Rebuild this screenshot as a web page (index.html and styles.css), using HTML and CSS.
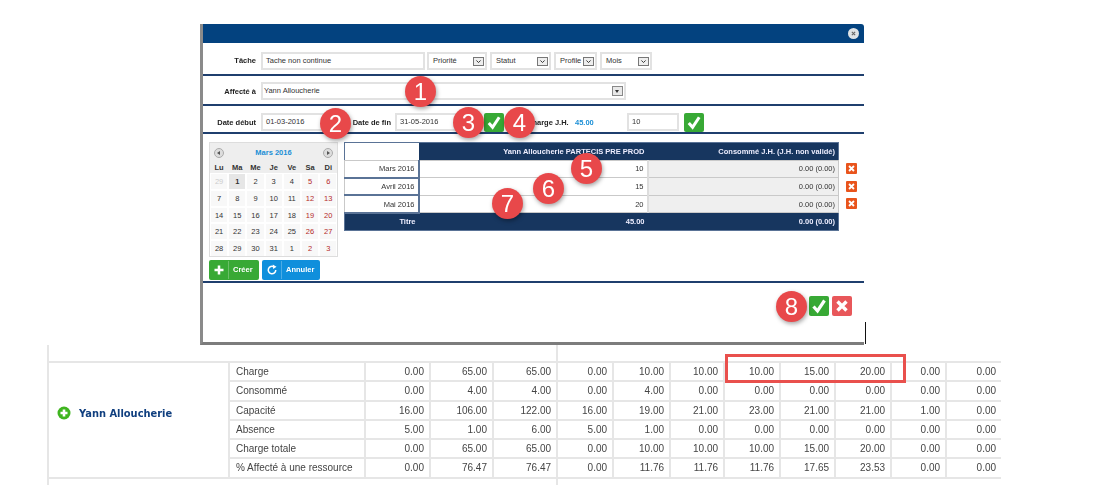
FILE: index.html
```html
<!DOCTYPE html>
<html lang="fr">
<head>
    <meta charset="UTF-8">
    <title>Affectation de tâche</title>
    <link rel="stylesheet" href="styles.css">
</head>
<body>

<svg width="0" height="0" class="defs">
    <symbol id="chev" viewBox="0 0 12 10"><path d="M3 3.5 6 6.5 9 3.5" fill="none" stroke="#333" stroke-width="1.4"/></symbol>
    <symbol id="check" viewBox="0 0 20 20"><path d="M4.5 10.5 8.5 15 15.5 4.5" fill="none" stroke="#fff" stroke-width="3.2"/></symbol>
    <symbol id="cross" viewBox="0 0 20 20"><path d="M5.5 5.5 14.5 14.5M14.5 5.5 5.5 14.5" fill="none" stroke="#fff" stroke-width="3.4"/></symbol>
</svg>

<div class="dialog">
    <div class="dialog-head">
        <span class="close"><svg viewBox="0 0 20 20"><path d="M7 7 13 13M13 7 7 13" fill="none" stroke="#666" stroke-width="2"/></svg></span>
    </div>

    <div class="row row-task">
        <label class="lbl">Tâche</label>
        <div class="field f-task">Tache non continue</div>
        <div class="pick p-prio">Priorité<svg class="arrow"><use href="#chev"/></svg></div>
        <div class="pick p-stat">Statut<svg class="arrow"><use href="#chev"/></svg></div>
        <div class="pick p-prof">Profile<svg class="arrow"><use href="#chev"/></svg></div>
        <div class="pick p-mois">Mois<svg class="arrow"><use href="#chev"/></svg></div>
    </div>

    <div class="row row-user">
        <label class="lbl">Affecté à</label>
        <div class="pick p-user">Yann Alloucherie<span class="arrow-dark"></span></div>
    </div>

    <div class="row row-dates">
        <label class="lbl">Date début</label>
        <div class="field f-start">01-03-2016</div>
        <label class="lbl lbl-end">Date de fin</label>
        <div class="field f-end">31-05-2016</div>
        <span class="ok ok-dates"><svg><use href="#check"/></svg></span>
        <label class="lbl lbl-charge">Charge J.H.</label>
        <span class="total">45.00</span>
        <div class="field f-charge">10</div>
        <span class="ok ok-charge"><svg><use href="#check"/></svg></span>
    </div>

    <div class="body">
        <div class="side">
            <div class="cal">
                <div class="cal-head">
                    <span class="nav"></span>
                    <span class="cal-title">Mars 2016</span>
                    <span class="nav nav-next"></span>
                </div>
                <div class="cal-dow">
                    <span>Lu</span><span>Ma</span><span>Me</span><span>Je</span><span>Ve</span><span>Sa</span><span>Di</span>
                </div>
                <div class="cal-days">
                    <span class="off">29</span><span class="today">1</span><span>2</span><span>3</span><span>4</span><span class="we">5</span><span class="we">6</span>
                    <span>7</span><span>8</span><span>9</span><span>10</span><span>11</span><span class="we">12</span><span class="we">13</span>
                    <span>14</span><span>15</span><span>16</span><span>17</span><span>18</span><span class="we">19</span><span class="we">20</span>
                    <span>21</span><span>22</span><span>23</span><span>24</span><span>25</span><span class="we">26</span><span class="we">27</span>
                    <span>28</span><span>29</span><span>30</span><span>31</span><span>1</span><span class="we">2</span><span class="we">3</span>
                </div>
            </div>
            <div class="actions">
                <button class="btn btn-add">
                    <svg viewBox="0 0 16 16"><path d="M8 2V14M2 8H14" fill="none" stroke="#fff" stroke-width="3.4"/></svg>
                    <span>Créer</span>
                </button>
                <button class="btn btn-undo">
                    <svg viewBox="0 0 16 16"><path d="M13 8A5 5 0 1 1 10.5 3.7" fill="none" stroke="#fff" stroke-width="2"/><path d="M9 .8 14 3.6 9.6 6.6Z" fill="#fff"/></svg>
                    <span>Annuler</span>
                </button>
            </div>
        </div>

        <div class="plan-wrap">
            <table class="plan">
                <thead>
                    <tr><th class="blank"></th><th>Yann Alloucherie PARTECIS PRE PROD</th><th>Consommé J.H. (J.H. non validé)</th></tr>
                </thead>
                <tbody>
                    <tr><td class="month">Mars 2016</td><td>10</td><td class="used">0.00 (0.00)</td></tr>
                    <tr><td class="month">Avril 2016</td><td>15</td><td class="used">0.00 (0.00)</td></tr>
                    <tr><td class="month">Mai 2016</td><td>20</td><td class="used">0.00 (0.00)</td></tr>
                </tbody>
                <tfoot>
                    <tr><th>Titre</th><th>45.00</th><th>0.00 (0.00)</th></tr>
                </tfoot>
            </table>
            <div class="dels">
                <span class="del"><svg><use href="#cross"/></svg></span>
                <span class="del"><svg><use href="#cross"/></svg></span>
                <span class="del"><svg><use href="#cross"/></svg></span>
            </div>
        </div>
    </div>

    <div class="foot">
        <span class="ok"><svg><use href="#check"/></svg></span>
        <span class="ko"><svg><use href="#cross"/></svg></span>
    </div>
</div>

<table class="grid">
    <colgroup>
        <col class="c-name"><col class="c-kind">
        <col class="c-a"><col class="c-b"><col class="c-c">
        <col class="c-d"><col class="c-e"><col class="c-f"><col class="c-g"><col class="c-h"><col class="c-i"><col class="c-j"><col class="c-k">
    </colgroup>
    <tr class="edge"><td colspan="5"></td><td colspan="8" class="open"></td></tr>
    <tr>
        <td rowspan="6" class="who"><span class="who-in"><svg viewBox="0 0 14 14"><circle cx="7" cy="7" r="6.5" fill="#3fb51f"/><path d="M7 3.5V10.5M3.5 7H10.5" stroke="#fff" stroke-width="2.6"/></svg>Yann Alloucherie</span></td>
        <td class="kind">Charge</td><td>0.00</td><td>65.00</td><td>65.00</td>
        <td>0.00</td><td>10.00</td><td>10.00</td><td>10.00</td><td>15.00</td><td>20.00</td><td>0.00</td><td class="open">0.00</td>
    </tr>
    <tr>
        <td class="kind">Consommé</td><td>0.00</td><td>4.00</td><td>4.00</td>
        <td>0.00</td><td>4.00</td><td>0.00</td><td>0.00</td><td>0.00</td><td>0.00</td><td>0.00</td><td class="open">0.00</td>
    </tr>
    <tr>
        <td class="kind">Capacité</td><td>16.00</td><td>106.00</td><td>122.00</td>
        <td>16.00</td><td>19.00</td><td>21.00</td><td>23.00</td><td>21.00</td><td>21.00</td><td>1.00</td><td class="open">0.00</td>
    </tr>
    <tr>
        <td class="kind">Absence</td><td>5.00</td><td>1.00</td><td>6.00</td>
        <td>5.00</td><td>1.00</td><td>0.00</td><td>0.00</td><td>0.00</td><td>0.00</td><td>0.00</td><td class="open">0.00</td>
    </tr>
    <tr>
        <td class="kind">Charge totale</td><td>0.00</td><td>65.00</td><td>65.00</td>
        <td>0.00</td><td>10.00</td><td>10.00</td><td>10.00</td><td>15.00</td><td>20.00</td><td>0.00</td><td class="open">0.00</td>
    </tr>
    <tr>
        <td class="kind">% Affecté à une ressource</td><td>0.00</td><td>76.47</td><td>76.47</td>
        <td>0.00</td><td>11.76</td><td>11.76</td><td>11.76</td><td>17.65</td><td>23.53</td><td>0.00</td><td class="open">0.00</td>
    </tr>
    <tr class="edge"><td colspan="5"></td><td colspan="8" class="open"></td></tr>
</table>

<!-- annotations posées sur la capture -->
<div class="mark m1">1</div>
<div class="mark m2">2</div>
<div class="mark m3">3</div>
<div class="mark m4">4</div>
<div class="mark m5">5</div>
<div class="mark m6">6</div>
<div class="mark m7">7</div>
<div class="mark m8">8</div>
<div class="hilite"></div>
<div class="tick"></div>

</body>
</html>
```

FILE: styles.css
```css
* {
    box-sizing: border-box;
}

html {
    background: #fff;
}

body {
    margin: 0;
    font-family: "Liberation Sans", Arial, sans-serif;
    font-size: 7.5px;
    color: #333;
    position: relative;
    height: 501px;
    overflow: hidden;
    filter: blur(.35px); /* the capture is a scaled-up picture */
}

.defs {
    position: absolute;
}

.dialog {
    width: 664px;
    height: 321px;
    margin: 24px 0 0 200px;
    border-left: 3px solid #8a8a8a;
    border-bottom: 3px solid #7c7c7c;
}

.dialog-head {
    height: 19px;
    background: #03427f;
    border-radius: 0 3px 0 0;
    display: flex;
    justify-content: flex-end;
    align-items: center;
    padding-right: 5px;
}

.close {
    width: 11px;
    height: 11px;
    border-radius: 50%;
    background: #dfe3e6;
    display: flex;
}

.row {
    display: flex;
    align-items: center;
    border-bottom: 2px solid #1f3f6e;
}

.row-task {
    height: 33px;
    padding-top: 4px;
}

.row-user {
    height: 30px;
    padding-top: 2px;
}

.row-dates {
    height: 28px;
    padding-top: 6px;
}

.lbl {
    width: 53px;
    margin-right: 5px;
    text-align: right;
    font-weight: bold;
    color: #222;
    white-space: nowrap;
    flex: none;
}

.field,
.pick {
    height: 18px;
    border: 2px solid #e2e2e2;
    background: #fff;
    line-height: 14px;
    padding-left: 3px;
    flex: none;
    position: relative;
}

.pick {
    margin-right: 3px;
    padding-left: 4px;
}

.f-task { width: 164px; margin-right: 2px; }
.p-prio { width: 60px; }
.p-stat { width: 61px; }
.p-prof { width: 43px; }
.p-mois { width: 52px; }
.p-user { width: 365px; padding-left: 1px; }

.arrow {
    position: absolute;
    right: 1px;
    top: 3px;
    width: 11px;
    height: 9px;
    border: 1px solid #777;
    background: #eee;
}

.arrow-dark {
    position: absolute;
    right: 1px;
    top: 2px;
    width: 11px;
    height: 10px;
    border: 1px solid #888;
    background: #e8e8e8;
}

.arrow-dark::after {
    content: "";
    position: absolute;
    left: 2px;
    top: 3px;
    border-left: 2.5px solid transparent;
    border-right: 2.5px solid transparent;
    border-top: 3px solid #333;
}

.f-start { width: 75px; margin-right: 16px; }
.lbl-end { width: 39px; margin-right: 4px; }
.f-end { width: 74px; margin-right: 15px; }
.lbl-charge { width: 39px; margin: 0 9px 0 23px; }
.total { width: 52px; color: #1b8fd6; font-weight: bold; flex: none; }
.f-charge { width: 52px; margin-right: 5px; }

.ok,
.ko {
    width: 20px;
    height: 20px;
    border-radius: 2px;
    background: #38a935;
    display: inline-block;
    flex: none;
}

.ok-dates,
.ok-charge {
    height: 19px;
}

.ko {
    background: #e8575a;
}

.ok svg,
.ko svg {
    width: 100%;
    height: 100%;
    display: block;
}

.body {
    height: 149px;
    padding: 8px 0 0 6px;
    display: flex;
    gap: 6px;
    border-bottom: 2px solid #1f3f6e;
}

.side {
    width: 129px;
    flex: none;
}

.cal {
    height: 115px;
    border: 1px solid #ddd;
    background: #fff;
}

.cal-head {
    height: 19px;
    background: #eee;
    display: flex;
    align-items: center;
    justify-content: space-between;
    padding: 0 4px;
}

.cal-title {
    font-weight: bold;
    color: #1b8fd6;
}

.nav {
    width: 10px;
    height: 10px;
    border: 1px solid #aaa;
    border-radius: 50%;
    background: #ddd;
    position: relative;
}

.nav::after {
    content: "";
    position: absolute;
    left: 2px;
    top: 2px;
    border-top: 2px solid transparent;
    border-bottom: 2px solid transparent;
    border-right: 3px solid #555;
}

.nav-next::after {
    left: 3px;
    border-right: 0;
    border-left: 3px solid #555;
}

.cal-dow,
.cal-days {
    display: grid;
    grid-template-columns: repeat(7, 18.2px);
    text-align: center;
}

.cal-dow {
    height: 11px;
    line-height: 11px;
    background: #eee;
    font-weight: bold;
    color: #333;
}

.cal-days {
    grid-auto-rows: 16.8px;
}

.cal-days span {
    margin: 1px;
    background: #f8f8f8;
    line-height: 15px;
}

.cal-days .off { color: #ccc; }
.cal-days .we { color: #b52a2a; }
.cal-days .today { background: #e6e6e6; font-weight: bold; color: #333; }

.actions {
    display: flex;
    gap: 3px;
    margin-top: 3px;
}

.btn {
    height: 20px;
    border: 0;
    border-radius: 2px;
    padding: 0;
    color: #fff;
    font: bold 7.5px "Liberation Sans", Arial, sans-serif;
    display: flex;
    align-items: center;
}

.btn svg {
    width: 12px;
    height: 12px;
    margin: 0 3px 0 4px;
    flex: none;
}

.btn span {
    border-left: 1px solid rgba(255, 255, 255, .25);
    line-height: 18px;
    padding-left: 4px;
}

.btn-add { width: 50px; background: #38a935; }
.btn-undo { width: 58px; background: #0f8fdc; }

.plan-wrap {
    display: flex;
    align-items: flex-start;
}

.plan {
    width: 495px;
    border-collapse: collapse;
    table-layout: fixed;
    border: 1px solid #5a7396;
}

.plan th,
.plan td {
    height: 17.6px;
    padding: 0 3px;
    text-align: right;
}

.plan th {
    background: #17365f;
    color: #eef;
    font-weight: bold;
}

.plan th:first-child,
.plan td:first-child {
    width: 74px;
}

.plan th:nth-child(2) {
    width: 229px;
}

.plan th.blank {
    background: #fff;
}

.plan td {
    border: 1px solid #c9c9c9;
}

.plan td.month {
    border-right: 2px solid #5a7396;
    border-bottom: 2px solid #5a7396;
}

.plan td.used {
    background: #efefef;
    border-left: 2px solid #ddd;
}

.dels {
    display: flex;
    flex-direction: column;
    gap: 6.5px;
    margin: 21px 0 0 7px;
}

.del {
    width: 11px;
    height: 11px;
    border-radius: 1px;
    background: #e9541c;
}

.del svg {
    width: 100%;
    height: 100%;
    display: block;
}

.foot {
    display: flex;
    justify-content: flex-end;
    gap: 3px;
    padding: 13px 12px 0 0;
}

.grid {
    width: 953px;
    margin: 0 0 0 47px;
    border-collapse: collapse;
    table-layout: fixed;
    font-size: 10px;
    color: #444;
}

.c-name { width: 181px; }
.c-kind { width: 136px; }
.c-a { width: 65px; }
.c-b { width: 63px; }
.c-c { width: 64px; }
.c-d { width: 56px; }
.c-e { width: 57px; }
.c-f { width: 54px; }
.c-g { width: 56px; }
.c-h { width: 55px; }
.c-i { width: 56px; }
.c-j { width: 55px; }
.c-k { width: 55px; }

.grid td {
    height: 19.25px;
    border: 2px solid #e6e6e6;
    padding: 0 5px 0 0;
    text-align: right;
}

.grid .open {
    border-right: 0;
}

.grid .edge td {
    height: 17px;
    border-top: 0;
}

.grid tr.edge:last-child td {
    height: 7px;
    border-bottom: 0;
}

.grid td.kind {
    text-align: left;
    padding-left: 6px;
}

.grid td.who {
    text-align: left;
    padding: 0 0 13px 8px;
}

.who-in {
    display: flex;
    align-items: center;
    gap: 8px;
    font: bold 9.9px "DejaVu Sans", sans-serif;
    color: #103f7f;
    white-space: nowrap;
}

.who-in svg {
    width: 14px;
    height: 14px;
}

.mark {
    position: absolute;
    width: 31px;
    height: 31px;
    border-radius: 50%;
    background: #e8484a;
    color: #fff;
    font-size: 24px;
    line-height: 31px;
    text-align: center;
    box-shadow: 1px 2px 4px rgba(0, 0, 0, .35);
}

.m1 { left: 405px; top: 76px; }
.m2 { left: 320px; top: 108px; }
.m3 { left: 453px; top: 107px; }
.m4 { left: 504px; top: 107px; }
.m5 { left: 571px; top: 153px; }
.m6 { left: 533px; top: 173px; }
.m7 { left: 492px; top: 188px; }
.m8 { left: 776px; top: 291px; }

.hilite {
    position: absolute;
    left: 725px;
    top: 354px;
    width: 181px;
    height: 29px;
    border: 3px solid #e9504d;
}

.tick {
    position: absolute;
    left: 865px;
    top: 322px;
    width: 1px;
    height: 22px;
    background: #111;
}
```
